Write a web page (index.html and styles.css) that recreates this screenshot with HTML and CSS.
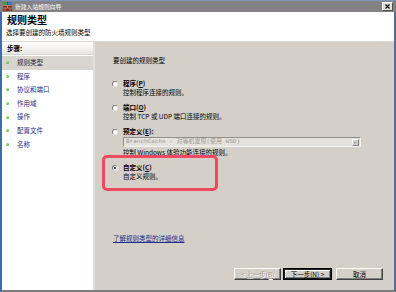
FILE: index.html
```html
<!DOCTYPE html>
<html lang="zh-CN">
<head>
    <meta charset="UTF-8">
    <title>新建入站规则向导</title>
    <link rel="stylesheet" href="styles.css">
</head>
<body>
    <div class="window">
        <div class="titlebar">
            <svg class="app-icon" width="9" height="9" viewBox="0 0 9 9">
                <rect x="0" y="0" width="9" height="9" fill="#8a2a1c"/>
                <rect x="0" y="0" width="4" height="3" fill="#3aa34a"/>
                <rect x="5" y="0" width="4" height="3" fill="#3c78c8"/>
                <path d="M0 3.5H9M0 6H9M4.5 3.5V6M2 6V9M7 6V9" stroke="#d8b0a0" stroke-width="0.6"/>
            </svg>
            <span class="title-text">新建入站规则向导</span>
            <span class="close-btn">
                <svg width="5" height="5" viewBox="0 0 5 5"><path d="M0.5 0.5L4.5 4.5M4.5 0.5L0.5 4.5" stroke="#000" stroke-width="1.2"/></svg>
            </span>
        </div>

        <div class="header">
            <h1>规则类型</h1>
            <p>选择要创建的防火墙规则类型</p>
        </div>

        <div class="body">
            <div class="steps">
                <div class="steps-title">步骤:</div>
                <ul class="step-list">
                    <li class="current"><span class="dot"></span>规则类型</li>
                    <li><span class="dot"></span>程序</li>
                    <li><span class="dot"></span>协议和端口</li>
                    <li><span class="dot"></span>作用域</li>
                    <li><span class="dot"></span>操作</li>
                    <li><span class="dot"></span>配置文件</li>
                    <li><span class="dot"></span>名称</li>
                </ul>
            </div>

            <div class="content">
                <p class="prompt">要创建的规则类型</p>

                <div class="options">
                    <div class="option">
                        <div class="option-label"><span class="radio"></span>程序(<u>P</u>)</div>
                        <div class="option-desc">控制程序连接的规则。</div>
                    </div>
                    <div class="option">
                        <div class="option-label"><span class="radio"></span>端口(<u>O</u>)</div>
                        <div class="option-desc">控制 TCP 或 UDP 端口连接的规则。</div>
                    </div>
                    <div class="option">
                        <div class="option-label"><span class="radio"></span>预定义(<u>E</u>):</div>
                        <div class="select">
                            <span class="select-text">BranchCache - 对等机发现(使用 WSD)</span>
                            <span class="select-arrow"></span>
                        </div>
                        <div class="option-desc">控制 Windows 体验功能连接的规则。</div>
                    </div>
                    <div class="option">
                        <div class="option-label"><span class="radio checked"></span>自定义(<u>C</u>)</div>
                        <div class="option-desc">自定义规则。</div>
                    </div>
                </div>

                <div class="highlight"></div>

                <a class="more-link" href="#">了解规则类型的详细信息</a>

                <div class="buttons">
                    <span class="btn disabled">&lt; 上一步(<u>B</u>)</span>
                    <span class="btn default">下一步(<u>N</u>) &gt;</span>
                    <span class="btn cancel">取消</span>
                </div>
            </div>
        </div>
    </div>
</body>
</html>
```

FILE: styles.css
```css
/* Fenêtre assistant */
body {
    margin: 0;
    padding: 0;
    background-color: #ffffff;
    font-family: "Noto Sans CJK SC", "Liberation Sans", sans-serif;
    font-size: 6.5px;
    color: #000;
}

.window {
    width: 396px;
    height: 292px;
    box-sizing: border-box;
    border-top: 1px solid #7d97bd;
    border-left: 2px solid #3d6daa;
    border-right: 2px solid #50709a;
    border-bottom: 2px solid #7c7c7c;
    display: flex;
    flex-direction: column;
    background-color: #ffffff;
}

.titlebar {
    height: 11px;
    background-color: #858285;
    display: flex;
    align-items: center;
    padding-left: 1px;
    margin-left: -2px;
    margin-right: -2px;
}

.app-icon {
    margin-left: 2px;
    margin-right: 3px;
}

.title-text {
    color: #ffffff;
    font-size: 5.8px;
    line-height: 11px;
    flex: 1;
}

.close-btn {
    width: 9px;
    height: 7px;
    margin-right: 3px;
    background-color: #e0ded9;
    border: 1px solid;
    border-color: #ffffff #505050 #505050 #ffffff;
    display: flex;
    align-items: center;
    justify-content: center;
}

.header {
    height: 30px;
    box-sizing: border-box;
    padding: 2px 0 0 5px;
    border-bottom: 1px solid #dcdad5;
}

.header h1 {
    margin: 0 0 2px 0;
    font-size: 10px;
    line-height: 12px;
    font-weight: bold;
}

.header p {
    margin: 0 0 0 -1px;
    line-height: 9px;
}

.body {
    flex: 1;
    display: flex;
}

.steps {
    width: 91px;
    border-right: 2px solid #e2e0dc;
    background-color: #ffffff;
}

.steps-title {
    height: 12px;
    line-height: 12px;
    padding-left: 5px;
    font-weight: bold;
    background: linear-gradient(#fdfdfc, #e9e7e3);
    border-bottom: 1px solid #d8d5cf;
}

.step-list {
    list-style-type: none;
    margin: 1px 0 0 0;
    padding: 0;
}

.step-list li {
    height: 13.6px;
    line-height: 13.6px;
    display: flex;
    align-items: center;
    padding-left: 4px;
    color: #1e2c84;
}

.step-list li.current {
    background-color: #d8d5cf;
    color: #1c1c3a;
}

.dot {
    width: 3px;
    height: 3px;
    border-radius: 50%;
    background: radial-gradient(circle at 35% 35%, #a8ec7a, #38a020);
    margin-right: 8px;
}

.content {
    flex: 1;
    position: relative;
    background-color: #d4d0c8;
    padding: 14px 11px 10px 18px;
    display: flex;
    flex-direction: column;
}

.prompt {
    margin: 0 0 14px 0;
    line-height: 9px;
}

.options {
    display: flex;
    flex-direction: column;
    gap: 6px;
    margin-left: -1px;
}

.option-label {
    display: flex;
    align-items: center;
    line-height: 9px;
    font-weight: bold;
}

.radio {
    width: 6px;
    height: 6px;
    box-sizing: border-box;
    border-radius: 50%;
    border: 1px solid;
    border-color: #808080 #e8e8e8 #e8e8e8 #808080;
    background-color: #ffffff;
    margin-right: 5px;
    display: flex;
    align-items: center;
    justify-content: center;
}

.radio.checked::after {
    content: "";
    width: 2px;
    height: 2px;
    border-radius: 50%;
    background-color: #000;
}

.option-desc {
    line-height: 9px;
    padding-left: 11px;
}

.select {
    margin: 1px 0 1px 11px;
    width: 238px;
    height: 10px;
    box-sizing: border-box;
    border: 1px solid;
    border-color: #8e8e8e #f4f4f4 #f4f4f4 #8e8e8e;
    background-color: #e4e2dd;
    display: flex;
    align-items: center;
}

.select-text {
    flex: 1;
    color: #9c9a96;
    font-family: "Liberation Mono", "Noto Sans CJK SC", monospace;
    font-size: 6px;
    line-height: 8px;
    padding-left: 2px;
}

.select-arrow {
    width: 7px;
    height: 7px;
    margin-right: 1px;
    background-color: #d4d0c8;
    border: 1px solid;
    box-sizing: border-box;
    border-color: #ffffff #808080 #808080 #ffffff;
    position: relative;
}

.select-arrow::after {
    content: "";
    position: absolute;
    left: 1px;
    top: 2px;
    border-left: 1.5px solid transparent;
    border-right: 1.5px solid transparent;
    border-top: 2px solid #8a8a8a;
}

.highlight {
    position: absolute;
    left: 7px;
    top: 113px;
    width: 116px;
    height: 36px;
    box-sizing: border-box;
    border: 3.5px solid #f04a62;
    border-radius: 5px;
}

.more-link {
    margin-top: 53px;
    align-self: flex-start;
    line-height: 9px;
    color: #1f2e8e;
    text-decoration: underline;
}

.buttons {
    margin-top: auto;
    display: flex;
    justify-content: flex-end;
    gap: 2px;
}

.btn {
    width: 47px;
    height: 12px;
    box-sizing: border-box;
    background-color: #d4d0c8;
    border: 1px solid;
    border-color: #ffffff #404040 #404040 #ffffff;
    box-shadow: inset -1px -1px #808080;
    display: flex;
    align-items: center;
    justify-content: center;
    line-height: 10px;
}

.btn.disabled {
    color: #a09c96;
    text-shadow: 1px 1px #ffffff;
}

.btn.default {
    width: 49px;
    outline: 1px solid #000;
    outline-offset: -1px;
    border-width: 2px;
    border-color: #202020;
    box-shadow: inset 1px 1px #ffffff, inset -1px -1px #808080;
}

.btn.cancel {
    margin-left: 2px;
}
```
